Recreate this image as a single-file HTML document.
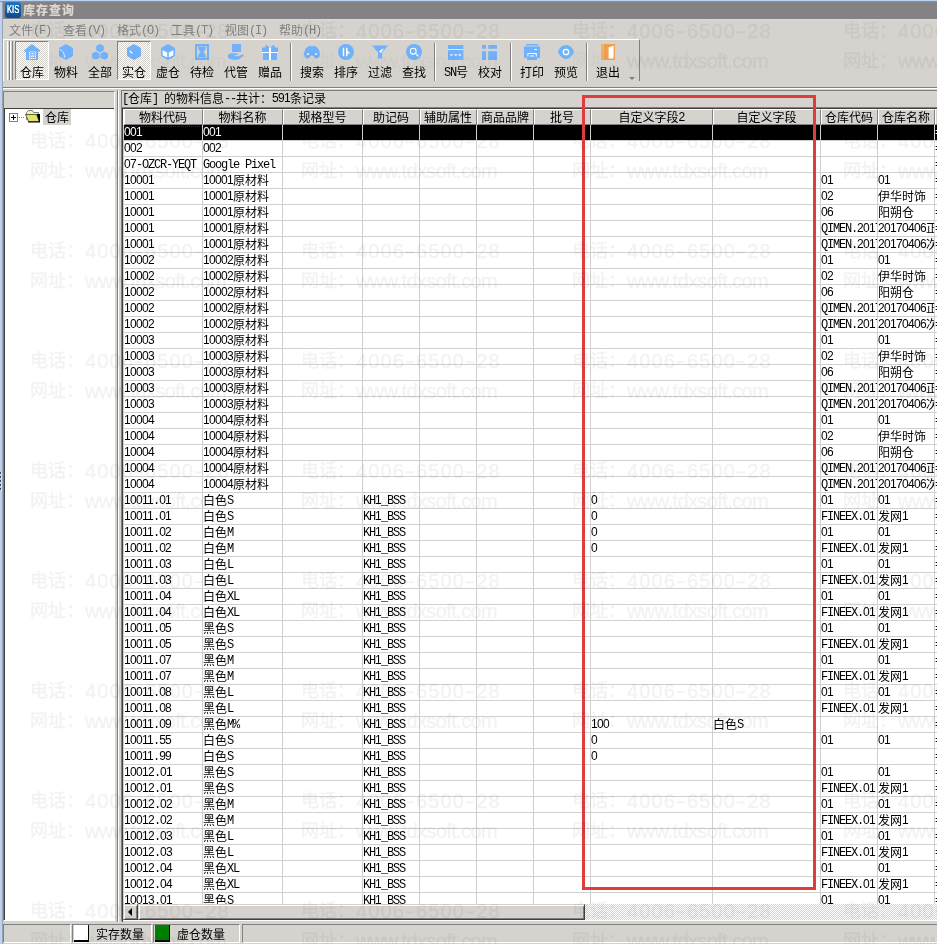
<!DOCTYPE html>
<html lang="zh-CN"><head><meta charset="utf-8"><title>库存查询</title>
<style>
*{box-sizing:border-box;margin:0;padding:0}
html,body{width:937px;height:944px;overflow:hidden;background:#d6d3ce}
body{font:12px/16px "Liberation Mono","Noto Sans CJK SC",monospace;letter-spacing:-1.2px;color:#000;-webkit-font-smoothing:antialiased}
b{font-weight:normal;letter-spacing:0;line-height:0;font-family:"Liberation Sans","Noto Sans CJK SC",sans-serif}
#win{position:absolute;left:0;top:0;width:937px;height:944px;overflow:hidden;will-change:transform}
#win div,#win span,#win svg{position:absolute}
#win b{position:relative;top:1px}
i{font-style:normal;font-family:"Liberation Sans",sans-serif;letter-spacing:-.674px;line-height:0}
#edge-l{left:0;top:0;width:3px;height:944px;background:#bfd2ea;border-right:1px solid #94a3b8}
#edge-l i{position:absolute;left:0;width:1px;height:2px;background:#3c4c5a;box-shadow:1px 1px 0 #eef3fa}
#edge-t{left:0;top:0;width:937px;height:2px;background:linear-gradient(#b6d2f0 0 1px,#8c909e 1px 2px)}
#title{left:3px;top:2px;width:934px;height:17px;background:#858286}
#appicon{left:2px;top:0;width:16px;height:16px;border-radius:3px;background:linear-gradient(#1a76c6,#0a4a8e)}
#appicon span{left:2px;top:2px;font:10px/12px "Liberation Sans",sans-serif;letter-spacing:0;color:#fff;transform:scaleX(.76);transform-origin:0 0;text-shadow:0 0 0 #fff}
#caption{left:20px;top:0;height:17px;line-height:21px;color:#dcd8d0;white-space:nowrap}
#caption{font-weight:900;letter-spacing:1px}
#menu{left:3px;top:19px;width:934px;height:20px;border-top:1px solid #dddad6}
.mi{top:3px;margin-left:-3px;height:16px;color:#808080;white-space:nowrap}
#tb{left:3px;top:39px;width:637px;height:42px;border-top:1px solid #fff;border-right:1px solid #808080;box-shadow:inset 1px 0 0 #fff}
.grip{left:4px;top:1px;width:3px;height:39px;border-left:1px solid #fff;border-right:1px solid #808080}
.grip.g2{left:7px}
.btn{top:1px;width:34px;height:39px;margin-left:-3px}
.btn.down{border:1px solid;border-color:#808080 #fff #fff #808080;background:repeating-conic-gradient(#fff 0 25%,#d6d3ce 0 50%) 0 0/2px 2px}
.btn svg{left:9px;top:3px}
.btn.down svg{left:8px;top:2px}
.btn .lbl{left:0;width:34px;top:24px;text-align:center;white-space:nowrap}
.btn.down .lbl{left:-1px;top:23px}
.sep{margin-left:-3px;top:3px;width:2px;height:38px;border-left:1px solid #808080;border-right:1px solid #fff}
.chev{left:626px;top:37px;width:0;height:0;border:3px solid transparent;border-top-color:#808080;border-bottom:0}
#rule{left:3px;top:87px;width:934px;height:2px;border-top:1px solid #808080;border-bottom:1px solid #fff}
#tree{left:3px;top:91px;width:112px;height:830px;border-top:1px solid #808080;border-left:1px solid #808080;border-right:1px solid #fff;border-bottom:1px solid #fff}
#treehead{left:0;top:0;width:110px;height:16px;background:#d6d3ce}
#treebody{left:0;top:16px;width:110px;height:812px;background:#fff;border-top:1px solid #404040;border-left:1px solid #404040}
.plus{left:4px;top:4px;width:9px;height:9px;border:1px solid #808080;background:#fff}
.plus:before,.plus:after{content:"";position:absolute;background:#000}
.plus:before{left:1px;top:3px;width:5px;height:1px}
.plus:after{left:3px;top:1px;width:1px;height:5px}
.dots{left:14px;top:8px;width:6px;height:1px;background:repeating-linear-gradient(90deg,#808080 0 1px,transparent 1px 2px)}
.fold{left:19px;top:0}
.node{left:38px;top:0;width:28px;height:16px;line-height:18px;background:#d6d3ce;padding-left:2px;white-space:nowrap}
#split{left:117px;top:90px;width:2px;height:832px;border-left:1px solid #808080;border-right:1px solid #fff}
#pane{left:121px;top:90px;width:816px;height:17px;border-top:1px solid #808080;border-left:1px solid #808080}
#info{left:0px;top:0px;height:16px;white-space:nowrap}
#gridbox{left:121px;top:107px;width:816px;height:814px;border-top:1px solid #808080;border-left:1px solid #808080;background:#fff}
#gridbox:before{content:"";position:absolute;left:0;top:0;width:815px;height:813px;border-top:1px solid #404040;border-left:1px solid #404040}
#grid{left:123px;top:109px;width:814px;height:795px;background:#fff;overflow:hidden}
.hr{left:0;top:0;width:900px;height:16px;background:#fff}
.hc{top:0;height:16px;padding-right:1px;background:#d6d3ce;border:1px solid;border-color:#fff #808080 #808080 #fff;text-align:center;white-space:nowrap;overflow:hidden;line-height:16px}
.r{left:0;width:900px;height:16px;border-bottom:1px solid #d0d0d0;border-left:1px solid #d0d0d0}
.c{top:0;height:15px;border-right:1px solid #d0d0d0;white-space:nowrap;overflow:hidden;padding-left:0;line-height:17px}
.r.sel{background:#000;color:#fff;border-bottom-color:#d0d0d0}
.r.sel .c{border-right-color:#d0d0d0}
.foc:after{content:"";position:absolute;left:0;top:1px;right:0;bottom:0;border-top:1px dotted #2c2c2c}
#hs{left:123px;top:904px;width:814px;height:16px;background:repeating-conic-gradient(#fff 0 25%,#d6d3ce 0 50%) 0 0/2px 2px}
.sbtn{left:0;top:0;width:15px;height:16px;background:#d6d3ce;border:1px solid;border-color:#d6d3ce #404040 #404040 #d6d3ce;box-shadow:inset 1px 1px 0 #fff,inset -1px -1px 0 #808080}
.sbtn i{position:absolute;left:4px;top:3px;width:0;height:0;border:4px solid transparent;border-right-color:#000;border-left:0}
.thumb{left:15px;top:0;width:447px;height:16px;background:#d6d3ce;border:1px solid;border-color:#d6d3ce #404040 #404040 #d6d3ce;box-shadow:inset 1px 1px 0 #fff,inset -1px -1px 0 #808080}
#status{left:0;top:923px;width:937px;height:21px}
.sp{top:1px;height:19px;border:1px solid;border-color:#808080 #fff #fff #808080}
.box{left:1px;top:0;width:15px;height:17px;background:#fff;border-bottom:2px solid #000;border-right:1px solid #000}
.box.grn{background:#008000}
.st{top:2px;white-space:nowrap}
#mark{left:582px;top:95px;width:234px;height:795px;border:3px solid #e03c3c}
#wm{left:0;top:0;width:937px;height:944px;pointer-events:none}
.w{font:19px/30px "Liberation Sans","Noto Sans CJK SC",sans-serif;letter-spacing:0;color:#000;-webkit-text-stroke:.4px #000;opacity:.05;white-space:nowrap;height:30px;width:240px}
.w b{font:18px/30px "Liberation Sans","Noto Sans CJK SC",sans-serif;letter-spacing:0;position:absolute !important;left:0;top:0}
.w span{left:55px;top:1px;font-size:20px}
.w .n{letter-spacing:1.12px}
.w .n u{text-decoration:none;display:inline-block;width:11.1px;text-align:center;transform:scaleX(1.5)}
.w .u{letter-spacing:-.59px}
.w.f{opacity:.022}
.w b.f{opacity:.44}

</style></head>
<body>
<div id="win">
<div id="edge-l"><i style="top:472px"></i><i style="top:476px"></i><i style="top:480px"></i><i style="top:484px"></i><i style="top:488px"></i></div><div id="edge-t"></div>
<div id="title"><div id="appicon"><span>KIS</span></div><div id="caption">库存查询</div></div>
<div id="menu"><span class="mi" style="left:9px"><b>文件</b>(F)</span><span class="mi" style="left:63px"><b>查看</b>(V)</span><span class="mi" style="left:117px"><b>格式</b>(O)</span><span class="mi" style="left:171px"><b>工具</b>(T)</span><span class="mi" style="left:225px"><b>视图</b>(I)</span><span class="mi" style="left:279px"><b>帮助</b>(H)</span></div>
<div id="tb"><div class="grip"></div><div class="grip g2"></div>
<div class="btn down" style="left:15px"><svg width="16" height="16" viewBox="0 0 16 16"><path d="M8 0 L16 6.2 V7.6 H14 V16 H2 V7.6 H0 V6.2 Z M5 7.4 V15 H12 V7.4 Z" fill="#6fb1fb" fill-rule="evenodd"/><path d="M5.9 8.3 H11.1 V14.1 H5.9 Z M6.7 9.1 V10.3 H10.3 V9.1 Z M6.7 11.2 V13.3 H10.3 V11.2 Z" fill="#6fb1fb" fill-rule="evenodd"/></svg><span class="lbl"><b>仓库</b></span></div>
<div class="btn" style="left:49px"><svg width="16" height="16" viewBox="0 0 16 16"><path d="M8 0 L15 4 V12 L8 16 L1 12 V4 Z" fill="#6fb1fb"/><path d="M1.6 5.2 Q6.4 7 6.6 13.6" fill="none" stroke="#e4ecf6" stroke-width="1"/></svg><span class="lbl"><b>物料</b></span></div>
<div class="btn" style="left:83px"><svg width="16" height="16" viewBox="0 0 16 16"><path d="M8 0 L11.78 2.1 L11.78 6.3 L8 8.4 L4.22 6.3 L4.22 2.1 Z M3.8 7.4 L7.58 9.5 L7.58 13.7 L3.8 15.8 L0.02 13.7 L0.02 9.5 Z M12.2 7.4 L15.98 9.5 L15.98 13.7 L12.2 15.8 L8.42 13.7 L8.42 9.5 Z" fill="#6fb1fb"/></svg><span class="lbl"><b>全部</b></span></div>
<div class="btn down" style="left:117px"><svg width="16" height="16" viewBox="0 0 16 16"><path d="M8 0 L15 4 V12 L8 16 L1 12 V4 Z" fill="#6fb1fb"/><path d="M3.6 6.6 L6.4 9.6" stroke="#fff" stroke-width="1.2" fill="none"/></svg><span class="lbl"><b>实仓</b></span></div>
<div class="btn" style="left:151px"><svg width="16" height="16" viewBox="0 0 16 16"><path d="M8 0 L15 4 V12 L8 16 L1 12 V4 Z" fill="#6fb1fb"/><path d="M2.6 6.2 L7.2 8.6 V13.6 L2.6 11.2 Z M13.4 6.2 L8.8 8.6 V13.6 L13.4 11.2 Z" fill="#fff"/></svg><span class="lbl"><b>虚仓</b></span></div>
<div class="btn" style="left:185px"><svg width="16" height="16" viewBox="0 0 16 16"><path d="M1 0 H15 V16 H1 Z M3 2.5 V13.5 H13 V2.5 Z" fill="#6fb1fb" fill-rule="evenodd"/><path d="M4 3 H12 Q11.6 6.6 9.4 8 Q11.6 9.4 12 13 H4 Q4.4 9.4 6.6 8 Q4.4 6.6 4 3 Z" fill="#6fb1fb"/></svg><span class="lbl"><b>待检</b></span></div>
<div class="btn" style="left:219px"><svg width="16" height="16" viewBox="0 0 16 16"><path d="M4 0 H13 V8 H4 Z" fill="#6fb1fb"/><path d="M0 11 Q1 9 4 9.2 L9 9.6 Q10.6 10 9.6 11 L6.4 11.2 V12 L10.6 12.2 L14.4 10.6 Q16 10.4 15.6 11.8 L10.6 15.4 Q7 16.4 3 15.2 L0 14 Z" fill="#6fb1fb"/></svg><span class="lbl"><b>代管</b></span></div>
<div class="btn" style="left:253px"><svg width="16" height="16" viewBox="0 0 16 16"><path d="M3 3.6 L4 0.6 L7 3 L8 3.6 L9 3 L12 0.6 L13 3.6 H16 V8 H15 V16 H1 V8 H0 V3.6 Z" fill="#6fb1fb"/><path d="M7 3.6 H9 V16 H7 Z M0 8 H16 V9 H0 Z" fill="#fff"/></svg><span class="lbl"><b>赠品</b></span></div>
<div class="sep" style="left:290px"></div>
<div class="btn" style="left:295px"><svg width="16" height="16" viewBox="0 0 16 16"><path d="M0 10.6 Q0.2 4.6 4.2 2.4 Q6.4 1.2 8 2.4 Q9.6 1.2 11.8 2.4 Q15.8 4.6 16 10.6 Q15.6 14.2 12.4 14.4 Q9.8 14.2 9.4 11.8 H6.6 Q6.2 14.2 3.6 14.4 Q0.4 14.2 0 10.6 Z" fill="#6fb1fb"/><path d="M2.4 10 L4 8.8 L5.6 10 L4 11.2 Z M10.4 10 L12 8.8 L13.6 10 L12 11.2 Z" fill="#f4e8f4"/></svg><span class="lbl"><b>搜索</b></span></div>
<div class="btn" style="left:329px"><svg width="16" height="16" viewBox="0 0 16 16"><circle cx="8" cy="8" r="8" fill="#6fb1fb"/><path d="M4.8 3.8 H6.2 V12.2 H4.8 Z M8 3.8 H9.4 V6.6 L12.2 9.4 H9.4 V12.2 H8 Z" fill="#fff"/></svg><span class="lbl"><b>排序</b></span></div>
<div class="btn" style="left:363px"><svg width="16" height="16" viewBox="0 0 16 16"><path d="M0 1.6 H16 L10.2 8.6 V14.6 H6 V8.6 Z" fill="#6fb1fb"/><path d="M6.4 7.4 L12 4.2 L8.8 9.4 L8 7.8 Z" fill="#fff"/></svg><span class="lbl"><b>过滤</b></span></div>
<div class="btn" style="left:397px"><svg width="16" height="16" viewBox="0 0 16 16"><circle cx="8" cy="8" r="8" fill="#6fb1fb"/><circle cx="7.2" cy="7.2" r="2.9" fill="none" stroke="#fff" stroke-width="1.1"/><path d="M9.4 9.4 L12.4 12.4" stroke="#fff" stroke-width="1.3"/></svg><span class="lbl"><b>查找</b></span></div>
<div class="sep" style="left:434px"></div>
<div class="btn" style="left:439px"><svg width="16" height="16" viewBox="0 0 16 16"><path d="M0 1 H15.4 V16 H0 Z" fill="#6fb1fb"/><path d="M0 5 H15.4 V5.9 H0 Z M2.2 10 H4.6 V11.8 H2.2 Z M6.4 10 H8.8 V11.8 H6.4 Z M10.6 10 H13 V11.8 H10.6 Z" fill="#dcebfb"/></svg><span class="lbl">SN<b>号</b></span></div>
<div class="btn" style="left:473px"><svg width="16" height="16" viewBox="0 0 16 16"><path d="M0 1 H4 V4.8 H0 Z M6.2 1 H15 V4.8 H6.2 Z M0 7.2 H4 V16 H0 Z M6.2 7.2 H15 V16 H6.2 Z" fill="#6fb1fb"/></svg><span class="lbl"><b>校对</b></span></div>
<div class="sep" style="left:510px"></div>
<div class="btn" style="left:515px"><svg width="16" height="16" viewBox="0 0 16 16"><path d="M2 0 H14.4 V1.6 H2 Z M0 2.6 H16 V14 H13 V16 H3 V14 H0 Z" fill="#6fb1fb"/><path d="M3.4 9 H12.8 V12.6 H11.8 V10 H4.4 V12.6 H3.4 Z M6 11.4 H10 V12.4 H6 Z M10.4 5 H13 V5.9 H10.4 Z" fill="#fff"/></svg><span class="lbl"><b>打印</b></span></div>
<div class="btn" style="left:549px"><svg width="16" height="16" viewBox="0 0 16 16"><path d="M0 8 Q1 4 5 1.6 Q8 0.2 11 1.6 Q15 4 16 8 Q15 11.6 11 14.2 Q8 15.6 5 14.2 Q1 11.6 0 8 Z" fill="#6fb1fb"/><circle cx="8" cy="8" r="2.7" fill="none" stroke="#fff" stroke-width="1.3"/></svg><span class="lbl"><b>预览</b></span></div>
<div class="sep" style="left:586px"></div>
<div class="btn" style="left:591px"><svg width="16" height="16" viewBox="0 0 16 16"><path d="M1 0 H15 V16 H1 Z" fill="#f0a04c"/><path d="M8.6 3.6 L13.6 1.6 V14.6 H8.6 Z" fill="#fff"/><path d="M1 0 H4 V16 H1 Z" fill="#f4b066"/></svg><span class="lbl"><b>退出</b></span></div>
<div class="chev"></div></div>
<div id="rule"></div>
<div id="tree"><div id="treehead"></div><div id="treebody"><div class="plus"></div><div class="dots"></div><svg class="fold" width="17" height="14" viewBox="0 0 17 14"><path d="M2.5 3.5 L4.5 1.5 H8.5 L9.5 3.5 H14.5 V5.5 H4.5 L2.5 10.5 Z" fill="#f4f4b4" stroke="#808070" stroke-width="1"/><path d="M1.5 5.5 H12.5 L15.5 12.5 H4.5 Z" fill="#e2e270" stroke="#606040" stroke-width="1"/><path d="M12.6 5 H16 V13.6 H4 V12.6 H15 Z" fill="#000"/></svg><span class="node"><b>仓库</b></span></div></div>
<div id="split"></div>
<div id="pane"><div id="info">[<b>仓库</b>] <b>的物料信息</b>--<b>共计：</b><i>591</i><b>条记录</b></div></div>
<div id="gridbox"></div>
<div id="grid">
<div class="hr"><div class="hc" style="left:1px;width:79px"><b>物料代码</b></div><div class="hc" style="left:80px;width:80px"><b>物料名称</b></div><div class="hc" style="left:160px;width:80px"><b>规格型号</b></div><div class="hc" style="left:240px;width:57px"><b>助记码</b></div><div class="hc" style="left:297px;width:57px"><b>辅助属性</b></div><div class="hc" style="left:354px;width:57px"><b>商品品牌</b></div><div class="hc" style="left:411px;width:57px"><b>批号</b></div><div class="hc" style="left:468px;width:122px"><b>自定义字段</b><i>2</i></div><div class="hc" style="left:590px;width:108px"><b>自定义字段</b></div><div class="hc" style="left:698px;width:57px"><b>仓库代码</b></div><div class="hc" style="left:755px;width:57px"><b>仓库名称</b></div><div class="hc" style="left:812px;width:25px"></div></div>
<div class="r sel" style="top:16px"><div class="c foc" style="left:0px;width:79px"><i>001</i></div><div class="c" style="left:79px;width:80px"><i>001</i></div><div class="c" style="left:159px;width:80px"></div><div class="c" style="left:239px;width:57px"></div><div class="c" style="left:296px;width:57px"></div><div class="c" style="left:353px;width:57px"></div><div class="c" style="left:410px;width:57px"></div><div class="c" style="left:467px;width:122px"></div><div class="c" style="left:589px;width:108px"></div><div class="c" style="left:697px;width:57px"></div><div class="c" style="left:754px;width:57px"></div><div class="c" style="left:811px;width:25px">=</div></div>
<div class="r" style="top:32px"><div class="c" style="left:0px;width:79px"><i>002</i></div><div class="c" style="left:79px;width:80px"><i>002</i></div><div class="c" style="left:159px;width:80px"></div><div class="c" style="left:239px;width:57px"></div><div class="c" style="left:296px;width:57px"></div><div class="c" style="left:353px;width:57px"></div><div class="c" style="left:410px;width:57px"></div><div class="c" style="left:467px;width:122px"></div><div class="c" style="left:589px;width:108px"></div><div class="c" style="left:697px;width:57px"></div><div class="c" style="left:754px;width:57px"></div><div class="c" style="left:811px;width:25px">=</div></div>
<div class="r" style="top:48px"><div class="c" style="left:0px;width:79px"><i>07</i>-OZCR-YEQT</div><div class="c" style="left:79px;width:80px">Google Pixel</div><div class="c" style="left:159px;width:80px"></div><div class="c" style="left:239px;width:57px"></div><div class="c" style="left:296px;width:57px"></div><div class="c" style="left:353px;width:57px"></div><div class="c" style="left:410px;width:57px"></div><div class="c" style="left:467px;width:122px"></div><div class="c" style="left:589px;width:108px"></div><div class="c" style="left:697px;width:57px"></div><div class="c" style="left:754px;width:57px"></div><div class="c" style="left:811px;width:25px">=</div></div>
<div class="r" style="top:64px"><div class="c" style="left:0px;width:79px"><i>10001</i></div><div class="c" style="left:79px;width:80px"><i>10001</i><b>原材料</b></div><div class="c" style="left:159px;width:80px"></div><div class="c" style="left:239px;width:57px"></div><div class="c" style="left:296px;width:57px"></div><div class="c" style="left:353px;width:57px"></div><div class="c" style="left:410px;width:57px"></div><div class="c" style="left:467px;width:122px"></div><div class="c" style="left:589px;width:108px"></div><div class="c" style="left:697px;width:57px"><i>01</i></div><div class="c" style="left:754px;width:57px"><i>01</i></div><div class="c" style="left:811px;width:25px">=</div></div>
<div class="r" style="top:80px"><div class="c" style="left:0px;width:79px"><i>10001</i></div><div class="c" style="left:79px;width:80px"><i>10001</i><b>原材料</b></div><div class="c" style="left:159px;width:80px"></div><div class="c" style="left:239px;width:57px"></div><div class="c" style="left:296px;width:57px"></div><div class="c" style="left:353px;width:57px"></div><div class="c" style="left:410px;width:57px"></div><div class="c" style="left:467px;width:122px"></div><div class="c" style="left:589px;width:108px"></div><div class="c" style="left:697px;width:57px"><i>02</i></div><div class="c" style="left:754px;width:57px"><b>伊华时饰</b></div><div class="c" style="left:811px;width:25px">=</div></div>
<div class="r" style="top:96px"><div class="c" style="left:0px;width:79px"><i>10001</i></div><div class="c" style="left:79px;width:80px"><i>10001</i><b>原材料</b></div><div class="c" style="left:159px;width:80px"></div><div class="c" style="left:239px;width:57px"></div><div class="c" style="left:296px;width:57px"></div><div class="c" style="left:353px;width:57px"></div><div class="c" style="left:410px;width:57px"></div><div class="c" style="left:467px;width:122px"></div><div class="c" style="left:589px;width:108px"></div><div class="c" style="left:697px;width:57px"><i>06</i></div><div class="c" style="left:754px;width:57px"><b>阳朔仓</b></div><div class="c" style="left:811px;width:25px">=</div></div>
<div class="r" style="top:112px"><div class="c" style="left:0px;width:79px"><i>10001</i></div><div class="c" style="left:79px;width:80px"><i>10001</i><b>原材料</b></div><div class="c" style="left:159px;width:80px"></div><div class="c" style="left:239px;width:57px"></div><div class="c" style="left:296px;width:57px"></div><div class="c" style="left:353px;width:57px"></div><div class="c" style="left:410px;width:57px"></div><div class="c" style="left:467px;width:122px"></div><div class="c" style="left:589px;width:108px"></div><div class="c" style="left:697px;width:57px">QIMEN.<i>2017</i></div><div class="c" style="left:754px;width:57px"><i>20170406</i><b>正品</b></div><div class="c" style="left:811px;width:25px">=</div></div>
<div class="r" style="top:128px"><div class="c" style="left:0px;width:79px"><i>10001</i></div><div class="c" style="left:79px;width:80px"><i>10001</i><b>原材料</b></div><div class="c" style="left:159px;width:80px"></div><div class="c" style="left:239px;width:57px"></div><div class="c" style="left:296px;width:57px"></div><div class="c" style="left:353px;width:57px"></div><div class="c" style="left:410px;width:57px"></div><div class="c" style="left:467px;width:122px"></div><div class="c" style="left:589px;width:108px"></div><div class="c" style="left:697px;width:57px">QIMEN.<i>2017</i></div><div class="c" style="left:754px;width:57px"><i>20170406</i><b>次品</b></div><div class="c" style="left:811px;width:25px">=</div></div>
<div class="r" style="top:144px"><div class="c" style="left:0px;width:79px"><i>10002</i></div><div class="c" style="left:79px;width:80px"><i>10002</i><b>原材料</b></div><div class="c" style="left:159px;width:80px"></div><div class="c" style="left:239px;width:57px"></div><div class="c" style="left:296px;width:57px"></div><div class="c" style="left:353px;width:57px"></div><div class="c" style="left:410px;width:57px"></div><div class="c" style="left:467px;width:122px"></div><div class="c" style="left:589px;width:108px"></div><div class="c" style="left:697px;width:57px"><i>01</i></div><div class="c" style="left:754px;width:57px"><i>01</i></div><div class="c" style="left:811px;width:25px">=</div></div>
<div class="r" style="top:160px"><div class="c" style="left:0px;width:79px"><i>10002</i></div><div class="c" style="left:79px;width:80px"><i>10002</i><b>原材料</b></div><div class="c" style="left:159px;width:80px"></div><div class="c" style="left:239px;width:57px"></div><div class="c" style="left:296px;width:57px"></div><div class="c" style="left:353px;width:57px"></div><div class="c" style="left:410px;width:57px"></div><div class="c" style="left:467px;width:122px"></div><div class="c" style="left:589px;width:108px"></div><div class="c" style="left:697px;width:57px"><i>02</i></div><div class="c" style="left:754px;width:57px"><b>伊华时饰</b></div><div class="c" style="left:811px;width:25px">=</div></div>
<div class="r" style="top:176px"><div class="c" style="left:0px;width:79px"><i>10002</i></div><div class="c" style="left:79px;width:80px"><i>10002</i><b>原材料</b></div><div class="c" style="left:159px;width:80px"></div><div class="c" style="left:239px;width:57px"></div><div class="c" style="left:296px;width:57px"></div><div class="c" style="left:353px;width:57px"></div><div class="c" style="left:410px;width:57px"></div><div class="c" style="left:467px;width:122px"></div><div class="c" style="left:589px;width:108px"></div><div class="c" style="left:697px;width:57px"><i>06</i></div><div class="c" style="left:754px;width:57px"><b>阳朔仓</b></div><div class="c" style="left:811px;width:25px">=</div></div>
<div class="r" style="top:192px"><div class="c" style="left:0px;width:79px"><i>10002</i></div><div class="c" style="left:79px;width:80px"><i>10002</i><b>原材料</b></div><div class="c" style="left:159px;width:80px"></div><div class="c" style="left:239px;width:57px"></div><div class="c" style="left:296px;width:57px"></div><div class="c" style="left:353px;width:57px"></div><div class="c" style="left:410px;width:57px"></div><div class="c" style="left:467px;width:122px"></div><div class="c" style="left:589px;width:108px"></div><div class="c" style="left:697px;width:57px">QIMEN.<i>2017</i></div><div class="c" style="left:754px;width:57px"><i>20170406</i><b>正品</b></div><div class="c" style="left:811px;width:25px">=</div></div>
<div class="r" style="top:208px"><div class="c" style="left:0px;width:79px"><i>10002</i></div><div class="c" style="left:79px;width:80px"><i>10002</i><b>原材料</b></div><div class="c" style="left:159px;width:80px"></div><div class="c" style="left:239px;width:57px"></div><div class="c" style="left:296px;width:57px"></div><div class="c" style="left:353px;width:57px"></div><div class="c" style="left:410px;width:57px"></div><div class="c" style="left:467px;width:122px"></div><div class="c" style="left:589px;width:108px"></div><div class="c" style="left:697px;width:57px">QIMEN.<i>2017</i></div><div class="c" style="left:754px;width:57px"><i>20170406</i><b>次品</b></div><div class="c" style="left:811px;width:25px">=</div></div>
<div class="r" style="top:224px"><div class="c" style="left:0px;width:79px"><i>10003</i></div><div class="c" style="left:79px;width:80px"><i>10003</i><b>原材料</b></div><div class="c" style="left:159px;width:80px"></div><div class="c" style="left:239px;width:57px"></div><div class="c" style="left:296px;width:57px"></div><div class="c" style="left:353px;width:57px"></div><div class="c" style="left:410px;width:57px"></div><div class="c" style="left:467px;width:122px"></div><div class="c" style="left:589px;width:108px"></div><div class="c" style="left:697px;width:57px"><i>01</i></div><div class="c" style="left:754px;width:57px"><i>01</i></div><div class="c" style="left:811px;width:25px">=</div></div>
<div class="r" style="top:240px"><div class="c" style="left:0px;width:79px"><i>10003</i></div><div class="c" style="left:79px;width:80px"><i>10003</i><b>原材料</b></div><div class="c" style="left:159px;width:80px"></div><div class="c" style="left:239px;width:57px"></div><div class="c" style="left:296px;width:57px"></div><div class="c" style="left:353px;width:57px"></div><div class="c" style="left:410px;width:57px"></div><div class="c" style="left:467px;width:122px"></div><div class="c" style="left:589px;width:108px"></div><div class="c" style="left:697px;width:57px"><i>02</i></div><div class="c" style="left:754px;width:57px"><b>伊华时饰</b></div><div class="c" style="left:811px;width:25px">=</div></div>
<div class="r" style="top:256px"><div class="c" style="left:0px;width:79px"><i>10003</i></div><div class="c" style="left:79px;width:80px"><i>10003</i><b>原材料</b></div><div class="c" style="left:159px;width:80px"></div><div class="c" style="left:239px;width:57px"></div><div class="c" style="left:296px;width:57px"></div><div class="c" style="left:353px;width:57px"></div><div class="c" style="left:410px;width:57px"></div><div class="c" style="left:467px;width:122px"></div><div class="c" style="left:589px;width:108px"></div><div class="c" style="left:697px;width:57px"><i>06</i></div><div class="c" style="left:754px;width:57px"><b>阳朔仓</b></div><div class="c" style="left:811px;width:25px">=</div></div>
<div class="r" style="top:272px"><div class="c" style="left:0px;width:79px"><i>10003</i></div><div class="c" style="left:79px;width:80px"><i>10003</i><b>原材料</b></div><div class="c" style="left:159px;width:80px"></div><div class="c" style="left:239px;width:57px"></div><div class="c" style="left:296px;width:57px"></div><div class="c" style="left:353px;width:57px"></div><div class="c" style="left:410px;width:57px"></div><div class="c" style="left:467px;width:122px"></div><div class="c" style="left:589px;width:108px"></div><div class="c" style="left:697px;width:57px">QIMEN.<i>2017</i></div><div class="c" style="left:754px;width:57px"><i>20170406</i><b>正品</b></div><div class="c" style="left:811px;width:25px">=</div></div>
<div class="r" style="top:288px"><div class="c" style="left:0px;width:79px"><i>10003</i></div><div class="c" style="left:79px;width:80px"><i>10003</i><b>原材料</b></div><div class="c" style="left:159px;width:80px"></div><div class="c" style="left:239px;width:57px"></div><div class="c" style="left:296px;width:57px"></div><div class="c" style="left:353px;width:57px"></div><div class="c" style="left:410px;width:57px"></div><div class="c" style="left:467px;width:122px"></div><div class="c" style="left:589px;width:108px"></div><div class="c" style="left:697px;width:57px">QIMEN.<i>2017</i></div><div class="c" style="left:754px;width:57px"><i>20170406</i><b>次品</b></div><div class="c" style="left:811px;width:25px">=</div></div>
<div class="r" style="top:304px"><div class="c" style="left:0px;width:79px"><i>10004</i></div><div class="c" style="left:79px;width:80px"><i>10004</i><b>原材料</b></div><div class="c" style="left:159px;width:80px"></div><div class="c" style="left:239px;width:57px"></div><div class="c" style="left:296px;width:57px"></div><div class="c" style="left:353px;width:57px"></div><div class="c" style="left:410px;width:57px"></div><div class="c" style="left:467px;width:122px"></div><div class="c" style="left:589px;width:108px"></div><div class="c" style="left:697px;width:57px"><i>01</i></div><div class="c" style="left:754px;width:57px"><i>01</i></div><div class="c" style="left:811px;width:25px">=</div></div>
<div class="r" style="top:320px"><div class="c" style="left:0px;width:79px"><i>10004</i></div><div class="c" style="left:79px;width:80px"><i>10004</i><b>原材料</b></div><div class="c" style="left:159px;width:80px"></div><div class="c" style="left:239px;width:57px"></div><div class="c" style="left:296px;width:57px"></div><div class="c" style="left:353px;width:57px"></div><div class="c" style="left:410px;width:57px"></div><div class="c" style="left:467px;width:122px"></div><div class="c" style="left:589px;width:108px"></div><div class="c" style="left:697px;width:57px"><i>02</i></div><div class="c" style="left:754px;width:57px"><b>伊华时饰</b></div><div class="c" style="left:811px;width:25px">=</div></div>
<div class="r" style="top:336px"><div class="c" style="left:0px;width:79px"><i>10004</i></div><div class="c" style="left:79px;width:80px"><i>10004</i><b>原材料</b></div><div class="c" style="left:159px;width:80px"></div><div class="c" style="left:239px;width:57px"></div><div class="c" style="left:296px;width:57px"></div><div class="c" style="left:353px;width:57px"></div><div class="c" style="left:410px;width:57px"></div><div class="c" style="left:467px;width:122px"></div><div class="c" style="left:589px;width:108px"></div><div class="c" style="left:697px;width:57px"><i>06</i></div><div class="c" style="left:754px;width:57px"><b>阳朔仓</b></div><div class="c" style="left:811px;width:25px">=</div></div>
<div class="r" style="top:352px"><div class="c" style="left:0px;width:79px"><i>10004</i></div><div class="c" style="left:79px;width:80px"><i>10004</i><b>原材料</b></div><div class="c" style="left:159px;width:80px"></div><div class="c" style="left:239px;width:57px"></div><div class="c" style="left:296px;width:57px"></div><div class="c" style="left:353px;width:57px"></div><div class="c" style="left:410px;width:57px"></div><div class="c" style="left:467px;width:122px"></div><div class="c" style="left:589px;width:108px"></div><div class="c" style="left:697px;width:57px">QIMEN.<i>2017</i></div><div class="c" style="left:754px;width:57px"><i>20170406</i><b>正品</b></div><div class="c" style="left:811px;width:25px">=</div></div>
<div class="r" style="top:368px"><div class="c" style="left:0px;width:79px"><i>10004</i></div><div class="c" style="left:79px;width:80px"><i>10004</i><b>原材料</b></div><div class="c" style="left:159px;width:80px"></div><div class="c" style="left:239px;width:57px"></div><div class="c" style="left:296px;width:57px"></div><div class="c" style="left:353px;width:57px"></div><div class="c" style="left:410px;width:57px"></div><div class="c" style="left:467px;width:122px"></div><div class="c" style="left:589px;width:108px"></div><div class="c" style="left:697px;width:57px">QIMEN.<i>2017</i></div><div class="c" style="left:754px;width:57px"><i>20170406</i><b>次品</b></div><div class="c" style="left:811px;width:25px">=</div></div>
<div class="r" style="top:384px"><div class="c" style="left:0px;width:79px"><i>10011</i>.<i>01</i></div><div class="c" style="left:79px;width:80px"><b>白色</b>S</div><div class="c" style="left:159px;width:80px"></div><div class="c" style="left:239px;width:57px">KH<i>1</i>_BSS</div><div class="c" style="left:296px;width:57px"></div><div class="c" style="left:353px;width:57px"></div><div class="c" style="left:410px;width:57px"></div><div class="c" style="left:467px;width:122px"><i>0</i></div><div class="c" style="left:589px;width:108px"></div><div class="c" style="left:697px;width:57px"><i>01</i></div><div class="c" style="left:754px;width:57px"><i>01</i></div><div class="c" style="left:811px;width:25px">=</div></div>
<div class="r" style="top:400px"><div class="c" style="left:0px;width:79px"><i>10011</i>.<i>01</i></div><div class="c" style="left:79px;width:80px"><b>白色</b>S</div><div class="c" style="left:159px;width:80px"></div><div class="c" style="left:239px;width:57px">KH<i>1</i>_BSS</div><div class="c" style="left:296px;width:57px"></div><div class="c" style="left:353px;width:57px"></div><div class="c" style="left:410px;width:57px"></div><div class="c" style="left:467px;width:122px"><i>0</i></div><div class="c" style="left:589px;width:108px"></div><div class="c" style="left:697px;width:57px">FINEEX.<i>01</i></div><div class="c" style="left:754px;width:57px"><b>发网</b><i>1</i></div><div class="c" style="left:811px;width:25px">=</div></div>
<div class="r" style="top:416px"><div class="c" style="left:0px;width:79px"><i>10011</i>.<i>02</i></div><div class="c" style="left:79px;width:80px"><b>白色</b>M</div><div class="c" style="left:159px;width:80px"></div><div class="c" style="left:239px;width:57px">KH<i>1</i>_BSS</div><div class="c" style="left:296px;width:57px"></div><div class="c" style="left:353px;width:57px"></div><div class="c" style="left:410px;width:57px"></div><div class="c" style="left:467px;width:122px"><i>0</i></div><div class="c" style="left:589px;width:108px"></div><div class="c" style="left:697px;width:57px"><i>01</i></div><div class="c" style="left:754px;width:57px"><i>01</i></div><div class="c" style="left:811px;width:25px">=</div></div>
<div class="r" style="top:432px"><div class="c" style="left:0px;width:79px"><i>10011</i>.<i>02</i></div><div class="c" style="left:79px;width:80px"><b>白色</b>M</div><div class="c" style="left:159px;width:80px"></div><div class="c" style="left:239px;width:57px">KH<i>1</i>_BSS</div><div class="c" style="left:296px;width:57px"></div><div class="c" style="left:353px;width:57px"></div><div class="c" style="left:410px;width:57px"></div><div class="c" style="left:467px;width:122px"><i>0</i></div><div class="c" style="left:589px;width:108px"></div><div class="c" style="left:697px;width:57px">FINEEX.<i>01</i></div><div class="c" style="left:754px;width:57px"><b>发网</b><i>1</i></div><div class="c" style="left:811px;width:25px">=</div></div>
<div class="r" style="top:448px"><div class="c" style="left:0px;width:79px"><i>10011</i>.<i>03</i></div><div class="c" style="left:79px;width:80px"><b>白色</b>L</div><div class="c" style="left:159px;width:80px"></div><div class="c" style="left:239px;width:57px">KH<i>1</i>_BSS</div><div class="c" style="left:296px;width:57px"></div><div class="c" style="left:353px;width:57px"></div><div class="c" style="left:410px;width:57px"></div><div class="c" style="left:467px;width:122px"></div><div class="c" style="left:589px;width:108px"></div><div class="c" style="left:697px;width:57px"><i>01</i></div><div class="c" style="left:754px;width:57px"><i>01</i></div><div class="c" style="left:811px;width:25px">=</div></div>
<div class="r" style="top:464px"><div class="c" style="left:0px;width:79px"><i>10011</i>.<i>03</i></div><div class="c" style="left:79px;width:80px"><b>白色</b>L</div><div class="c" style="left:159px;width:80px"></div><div class="c" style="left:239px;width:57px">KH<i>1</i>_BSS</div><div class="c" style="left:296px;width:57px"></div><div class="c" style="left:353px;width:57px"></div><div class="c" style="left:410px;width:57px"></div><div class="c" style="left:467px;width:122px"></div><div class="c" style="left:589px;width:108px"></div><div class="c" style="left:697px;width:57px">FINEEX.<i>01</i></div><div class="c" style="left:754px;width:57px"><b>发网</b><i>1</i></div><div class="c" style="left:811px;width:25px">=</div></div>
<div class="r" style="top:480px"><div class="c" style="left:0px;width:79px"><i>10011</i>.<i>04</i></div><div class="c" style="left:79px;width:80px"><b>白色</b>XL</div><div class="c" style="left:159px;width:80px"></div><div class="c" style="left:239px;width:57px">KH<i>1</i>_BSS</div><div class="c" style="left:296px;width:57px"></div><div class="c" style="left:353px;width:57px"></div><div class="c" style="left:410px;width:57px"></div><div class="c" style="left:467px;width:122px"></div><div class="c" style="left:589px;width:108px"></div><div class="c" style="left:697px;width:57px"><i>01</i></div><div class="c" style="left:754px;width:57px"><i>01</i></div><div class="c" style="left:811px;width:25px">=</div></div>
<div class="r" style="top:496px"><div class="c" style="left:0px;width:79px"><i>10011</i>.<i>04</i></div><div class="c" style="left:79px;width:80px"><b>白色</b>XL</div><div class="c" style="left:159px;width:80px"></div><div class="c" style="left:239px;width:57px">KH<i>1</i>_BSS</div><div class="c" style="left:296px;width:57px"></div><div class="c" style="left:353px;width:57px"></div><div class="c" style="left:410px;width:57px"></div><div class="c" style="left:467px;width:122px"></div><div class="c" style="left:589px;width:108px"></div><div class="c" style="left:697px;width:57px">FINEEX.<i>01</i></div><div class="c" style="left:754px;width:57px"><b>发网</b><i>1</i></div><div class="c" style="left:811px;width:25px">=</div></div>
<div class="r" style="top:512px"><div class="c" style="left:0px;width:79px"><i>10011</i>.<i>05</i></div><div class="c" style="left:79px;width:80px"><b>黑色</b>S</div><div class="c" style="left:159px;width:80px"></div><div class="c" style="left:239px;width:57px">KH<i>1</i>_BSS</div><div class="c" style="left:296px;width:57px"></div><div class="c" style="left:353px;width:57px"></div><div class="c" style="left:410px;width:57px"></div><div class="c" style="left:467px;width:122px"></div><div class="c" style="left:589px;width:108px"></div><div class="c" style="left:697px;width:57px"><i>01</i></div><div class="c" style="left:754px;width:57px"><i>01</i></div><div class="c" style="left:811px;width:25px">=</div></div>
<div class="r" style="top:528px"><div class="c" style="left:0px;width:79px"><i>10011</i>.<i>05</i></div><div class="c" style="left:79px;width:80px"><b>黑色</b>S</div><div class="c" style="left:159px;width:80px"></div><div class="c" style="left:239px;width:57px">KH<i>1</i>_BSS</div><div class="c" style="left:296px;width:57px"></div><div class="c" style="left:353px;width:57px"></div><div class="c" style="left:410px;width:57px"></div><div class="c" style="left:467px;width:122px"></div><div class="c" style="left:589px;width:108px"></div><div class="c" style="left:697px;width:57px">FINEEX.<i>01</i></div><div class="c" style="left:754px;width:57px"><b>发网</b><i>1</i></div><div class="c" style="left:811px;width:25px">=</div></div>
<div class="r" style="top:544px"><div class="c" style="left:0px;width:79px"><i>10011</i>.<i>07</i></div><div class="c" style="left:79px;width:80px"><b>黑色</b>M</div><div class="c" style="left:159px;width:80px"></div><div class="c" style="left:239px;width:57px">KH<i>1</i>_BSS</div><div class="c" style="left:296px;width:57px"></div><div class="c" style="left:353px;width:57px"></div><div class="c" style="left:410px;width:57px"></div><div class="c" style="left:467px;width:122px"></div><div class="c" style="left:589px;width:108px"></div><div class="c" style="left:697px;width:57px"><i>01</i></div><div class="c" style="left:754px;width:57px"><i>01</i></div><div class="c" style="left:811px;width:25px">=</div></div>
<div class="r" style="top:560px"><div class="c" style="left:0px;width:79px"><i>10011</i>.<i>07</i></div><div class="c" style="left:79px;width:80px"><b>黑色</b>M</div><div class="c" style="left:159px;width:80px"></div><div class="c" style="left:239px;width:57px">KH<i>1</i>_BSS</div><div class="c" style="left:296px;width:57px"></div><div class="c" style="left:353px;width:57px"></div><div class="c" style="left:410px;width:57px"></div><div class="c" style="left:467px;width:122px"></div><div class="c" style="left:589px;width:108px"></div><div class="c" style="left:697px;width:57px">FINEEX.<i>01</i></div><div class="c" style="left:754px;width:57px"><b>发网</b><i>1</i></div><div class="c" style="left:811px;width:25px">=</div></div>
<div class="r" style="top:576px"><div class="c" style="left:0px;width:79px"><i>10011</i>.<i>08</i></div><div class="c" style="left:79px;width:80px"><b>黑色</b>L</div><div class="c" style="left:159px;width:80px"></div><div class="c" style="left:239px;width:57px">KH<i>1</i>_BSS</div><div class="c" style="left:296px;width:57px"></div><div class="c" style="left:353px;width:57px"></div><div class="c" style="left:410px;width:57px"></div><div class="c" style="left:467px;width:122px"></div><div class="c" style="left:589px;width:108px"></div><div class="c" style="left:697px;width:57px"><i>01</i></div><div class="c" style="left:754px;width:57px"><i>01</i></div><div class="c" style="left:811px;width:25px">=</div></div>
<div class="r" style="top:592px"><div class="c" style="left:0px;width:79px"><i>10011</i>.<i>08</i></div><div class="c" style="left:79px;width:80px"><b>黑色</b>L</div><div class="c" style="left:159px;width:80px"></div><div class="c" style="left:239px;width:57px">KH<i>1</i>_BSS</div><div class="c" style="left:296px;width:57px"></div><div class="c" style="left:353px;width:57px"></div><div class="c" style="left:410px;width:57px"></div><div class="c" style="left:467px;width:122px"></div><div class="c" style="left:589px;width:108px"></div><div class="c" style="left:697px;width:57px">FINEEX.<i>01</i></div><div class="c" style="left:754px;width:57px"><b>发网</b><i>1</i></div><div class="c" style="left:811px;width:25px">=</div></div>
<div class="r" style="top:608px"><div class="c" style="left:0px;width:79px"><i>10011</i>.<i>09</i></div><div class="c" style="left:79px;width:80px"><b>黑色</b>M%</div><div class="c" style="left:159px;width:80px"></div><div class="c" style="left:239px;width:57px">KH<i>1</i>_BSS</div><div class="c" style="left:296px;width:57px"></div><div class="c" style="left:353px;width:57px"></div><div class="c" style="left:410px;width:57px"></div><div class="c" style="left:467px;width:122px"><i>100</i></div><div class="c" style="left:589px;width:108px"><b>白色</b>S</div><div class="c" style="left:697px;width:57px"></div><div class="c" style="left:754px;width:57px"></div><div class="c" style="left:811px;width:25px">=</div></div>
<div class="r" style="top:624px"><div class="c" style="left:0px;width:79px"><i>10011</i>.<i>55</i></div><div class="c" style="left:79px;width:80px"><b>白色</b>S</div><div class="c" style="left:159px;width:80px"></div><div class="c" style="left:239px;width:57px">KH<i>1</i>_BSS</div><div class="c" style="left:296px;width:57px"></div><div class="c" style="left:353px;width:57px"></div><div class="c" style="left:410px;width:57px"></div><div class="c" style="left:467px;width:122px"><i>0</i></div><div class="c" style="left:589px;width:108px"></div><div class="c" style="left:697px;width:57px"><i>01</i></div><div class="c" style="left:754px;width:57px"><i>01</i></div><div class="c" style="left:811px;width:25px">=</div></div>
<div class="r" style="top:640px"><div class="c" style="left:0px;width:79px"><i>10011</i>.<i>99</i></div><div class="c" style="left:79px;width:80px"><b>白色</b>S</div><div class="c" style="left:159px;width:80px"></div><div class="c" style="left:239px;width:57px">KH<i>1</i>_BSS</div><div class="c" style="left:296px;width:57px"></div><div class="c" style="left:353px;width:57px"></div><div class="c" style="left:410px;width:57px"></div><div class="c" style="left:467px;width:122px"><i>0</i></div><div class="c" style="left:589px;width:108px"></div><div class="c" style="left:697px;width:57px"></div><div class="c" style="left:754px;width:57px"></div><div class="c" style="left:811px;width:25px">=</div></div>
<div class="r" style="top:656px"><div class="c" style="left:0px;width:79px"><i>10012</i>.<i>01</i></div><div class="c" style="left:79px;width:80px"><b>黑色</b>S</div><div class="c" style="left:159px;width:80px"></div><div class="c" style="left:239px;width:57px">KH<i>1</i>_BSS</div><div class="c" style="left:296px;width:57px"></div><div class="c" style="left:353px;width:57px"></div><div class="c" style="left:410px;width:57px"></div><div class="c" style="left:467px;width:122px"></div><div class="c" style="left:589px;width:108px"></div><div class="c" style="left:697px;width:57px"><i>01</i></div><div class="c" style="left:754px;width:57px"><i>01</i></div><div class="c" style="left:811px;width:25px">=</div></div>
<div class="r" style="top:672px"><div class="c" style="left:0px;width:79px"><i>10012</i>.<i>01</i></div><div class="c" style="left:79px;width:80px"><b>黑色</b>S</div><div class="c" style="left:159px;width:80px"></div><div class="c" style="left:239px;width:57px">KH<i>1</i>_BSS</div><div class="c" style="left:296px;width:57px"></div><div class="c" style="left:353px;width:57px"></div><div class="c" style="left:410px;width:57px"></div><div class="c" style="left:467px;width:122px"></div><div class="c" style="left:589px;width:108px"></div><div class="c" style="left:697px;width:57px">FINEEX.<i>01</i></div><div class="c" style="left:754px;width:57px"><b>发网</b><i>1</i></div><div class="c" style="left:811px;width:25px">=</div></div>
<div class="r" style="top:688px"><div class="c" style="left:0px;width:79px"><i>10012</i>.<i>02</i></div><div class="c" style="left:79px;width:80px"><b>黑色</b>M</div><div class="c" style="left:159px;width:80px"></div><div class="c" style="left:239px;width:57px">KH<i>1</i>_BSS</div><div class="c" style="left:296px;width:57px"></div><div class="c" style="left:353px;width:57px"></div><div class="c" style="left:410px;width:57px"></div><div class="c" style="left:467px;width:122px"></div><div class="c" style="left:589px;width:108px"></div><div class="c" style="left:697px;width:57px"><i>01</i></div><div class="c" style="left:754px;width:57px"><i>01</i></div><div class="c" style="left:811px;width:25px">=</div></div>
<div class="r" style="top:704px"><div class="c" style="left:0px;width:79px"><i>10012</i>.<i>02</i></div><div class="c" style="left:79px;width:80px"><b>黑色</b>M</div><div class="c" style="left:159px;width:80px"></div><div class="c" style="left:239px;width:57px">KH<i>1</i>_BSS</div><div class="c" style="left:296px;width:57px"></div><div class="c" style="left:353px;width:57px"></div><div class="c" style="left:410px;width:57px"></div><div class="c" style="left:467px;width:122px"></div><div class="c" style="left:589px;width:108px"></div><div class="c" style="left:697px;width:57px">FINEEX.<i>01</i></div><div class="c" style="left:754px;width:57px"><b>发网</b><i>1</i></div><div class="c" style="left:811px;width:25px">=</div></div>
<div class="r" style="top:720px"><div class="c" style="left:0px;width:79px"><i>10012</i>.<i>03</i></div><div class="c" style="left:79px;width:80px"><b>黑色</b>L</div><div class="c" style="left:159px;width:80px"></div><div class="c" style="left:239px;width:57px">KH<i>1</i>_BSS</div><div class="c" style="left:296px;width:57px"></div><div class="c" style="left:353px;width:57px"></div><div class="c" style="left:410px;width:57px"></div><div class="c" style="left:467px;width:122px"></div><div class="c" style="left:589px;width:108px"></div><div class="c" style="left:697px;width:57px"><i>01</i></div><div class="c" style="left:754px;width:57px"><i>01</i></div><div class="c" style="left:811px;width:25px">=</div></div>
<div class="r" style="top:736px"><div class="c" style="left:0px;width:79px"><i>10012</i>.<i>03</i></div><div class="c" style="left:79px;width:80px"><b>黑色</b>L</div><div class="c" style="left:159px;width:80px"></div><div class="c" style="left:239px;width:57px">KH<i>1</i>_BSS</div><div class="c" style="left:296px;width:57px"></div><div class="c" style="left:353px;width:57px"></div><div class="c" style="left:410px;width:57px"></div><div class="c" style="left:467px;width:122px"></div><div class="c" style="left:589px;width:108px"></div><div class="c" style="left:697px;width:57px">FINEEX.<i>01</i></div><div class="c" style="left:754px;width:57px"><b>发网</b><i>1</i></div><div class="c" style="left:811px;width:25px">=</div></div>
<div class="r" style="top:752px"><div class="c" style="left:0px;width:79px"><i>10012</i>.<i>04</i></div><div class="c" style="left:79px;width:80px"><b>黑色</b>XL</div><div class="c" style="left:159px;width:80px"></div><div class="c" style="left:239px;width:57px">KH<i>1</i>_BSS</div><div class="c" style="left:296px;width:57px"></div><div class="c" style="left:353px;width:57px"></div><div class="c" style="left:410px;width:57px"></div><div class="c" style="left:467px;width:122px"></div><div class="c" style="left:589px;width:108px"></div><div class="c" style="left:697px;width:57px"><i>01</i></div><div class="c" style="left:754px;width:57px"><i>01</i></div><div class="c" style="left:811px;width:25px">=</div></div>
<div class="r" style="top:768px"><div class="c" style="left:0px;width:79px"><i>10012</i>.<i>04</i></div><div class="c" style="left:79px;width:80px"><b>黑色</b>XL</div><div class="c" style="left:159px;width:80px"></div><div class="c" style="left:239px;width:57px">KH<i>1</i>_BSS</div><div class="c" style="left:296px;width:57px"></div><div class="c" style="left:353px;width:57px"></div><div class="c" style="left:410px;width:57px"></div><div class="c" style="left:467px;width:122px"></div><div class="c" style="left:589px;width:108px"></div><div class="c" style="left:697px;width:57px">FINEEX.<i>01</i></div><div class="c" style="left:754px;width:57px"><b>发网</b><i>1</i></div><div class="c" style="left:811px;width:25px">=</div></div>
<div class="r" style="top:784px"><div class="c" style="left:0px;width:79px"><i>10013</i>.<i>01</i></div><div class="c" style="left:79px;width:80px"><b>黑色</b>S</div><div class="c" style="left:159px;width:80px"></div><div class="c" style="left:239px;width:57px">KH<i>1</i>_BSS</div><div class="c" style="left:296px;width:57px"></div><div class="c" style="left:353px;width:57px"></div><div class="c" style="left:410px;width:57px"></div><div class="c" style="left:467px;width:122px"></div><div class="c" style="left:589px;width:108px"></div><div class="c" style="left:697px;width:57px"><i>01</i></div><div class="c" style="left:754px;width:57px"><i>01</i></div><div class="c" style="left:811px;width:25px">=</div></div>
</div>
<div id="hs"><div class="sbtn"><i></i></div><div class="thumb"></div></div>
<div id="status"><div class="sp" style="left:3px;width:68px"></div><div class="sp" style="left:72px;width:80px"><span class="box"></span><span class="st" style="left:23px"><b>实存数量</b></span></div><div class="sp" style="left:153px;width:87px"><span class="box grn"></span><span class="st" style="left:23px"><b>虚仓数量</b></span></div><div class="sp" style="left:242px;width:700px"></div></div>
<div id="mark"></div>
<div id="wm">
<div class="w" style="left:30px;top:15px"><b>电话：</b><span class="n">4006<u>-</u>6500<u>-</u>28</span></div><div class="w f" style="left:30px;top:45px"><b>网址：</b><span class="u">www.tdxsoft.com</span></div>
<div class="w" style="left:301px;top:15px"><b>电话：</b><span class="n">4006<u>-</u>6500<u>-</u>28</span></div><div class="w f" style="left:301px;top:45px"><b>网址：</b><span class="u">www.tdxsoft.com</span></div>
<div class="w" style="left:572px;top:15px"><b>电话：</b><span class="n">4006<u>-</u>6500<u>-</u>28</span></div><div class="w" style="left:572px;top:45px"><b class="f">网址：</b><span class="u">www.tdxsoft.com</span></div>
<div class="w" style="left:843px;top:15px"><b>电话：</b><span class="n">4006<u>-</u>6500<u>-</u>28</span></div><div class="w" style="left:843px;top:45px"><b>网址：</b><span class="u">www.tdxsoft.com</span></div>
<div class="w" style="left:30px;top:125px"><b>电话：</b><span class="n">4006<u>-</u>6500<u>-</u>28</span></div><div class="w" style="left:30px;top:155px"><b>网址：</b><span class="u">www.tdxsoft.com</span></div>
<div class="w" style="left:301px;top:125px"><b>电话：</b><span class="n">4006<u>-</u>6500<u>-</u>28</span></div><div class="w" style="left:301px;top:155px"><b>网址：</b><span class="u">www.tdxsoft.com</span></div>
<div class="w" style="left:572px;top:125px"><b>电话：</b><span class="n">4006<u>-</u>6500<u>-</u>28</span></div><div class="w" style="left:572px;top:155px"><b>网址：</b><span class="u">www.tdxsoft.com</span></div>
<div class="w" style="left:843px;top:125px"><b>电话：</b><span class="n">4006<u>-</u>6500<u>-</u>28</span></div><div class="w" style="left:843px;top:155px"><b>网址：</b><span class="u">www.tdxsoft.com</span></div>
<div class="w" style="left:30px;top:235px"><b>电话：</b><span class="n">4006<u>-</u>6500<u>-</u>28</span></div><div class="w" style="left:30px;top:265px"><b>网址：</b><span class="u">www.tdxsoft.com</span></div>
<div class="w" style="left:301px;top:235px"><b>电话：</b><span class="n">4006<u>-</u>6500<u>-</u>28</span></div><div class="w" style="left:301px;top:265px"><b>网址：</b><span class="u">www.tdxsoft.com</span></div>
<div class="w" style="left:572px;top:235px"><b>电话：</b><span class="n">4006<u>-</u>6500<u>-</u>28</span></div><div class="w" style="left:572px;top:265px"><b>网址：</b><span class="u">www.tdxsoft.com</span></div>
<div class="w" style="left:843px;top:235px"><b>电话：</b><span class="n">4006<u>-</u>6500<u>-</u>28</span></div><div class="w" style="left:843px;top:265px"><b>网址：</b><span class="u">www.tdxsoft.com</span></div>
<div class="w" style="left:30px;top:345px"><b>电话：</b><span class="n">4006<u>-</u>6500<u>-</u>28</span></div><div class="w" style="left:30px;top:375px"><b>网址：</b><span class="u">www.tdxsoft.com</span></div>
<div class="w" style="left:301px;top:345px"><b>电话：</b><span class="n">4006<u>-</u>6500<u>-</u>28</span></div><div class="w" style="left:301px;top:375px"><b>网址：</b><span class="u">www.tdxsoft.com</span></div>
<div class="w" style="left:572px;top:345px"><b>电话：</b><span class="n">4006<u>-</u>6500<u>-</u>28</span></div><div class="w" style="left:572px;top:375px"><b>网址：</b><span class="u">www.tdxsoft.com</span></div>
<div class="w" style="left:843px;top:345px"><b>电话：</b><span class="n">4006<u>-</u>6500<u>-</u>28</span></div><div class="w" style="left:843px;top:375px"><b>网址：</b><span class="u">www.tdxsoft.com</span></div>
<div class="w" style="left:30px;top:455px"><b>电话：</b><span class="n">4006<u>-</u>6500<u>-</u>28</span></div><div class="w" style="left:30px;top:485px"><b>网址：</b><span class="u">www.tdxsoft.com</span></div>
<div class="w" style="left:301px;top:455px"><b>电话：</b><span class="n">4006<u>-</u>6500<u>-</u>28</span></div><div class="w" style="left:301px;top:485px"><b>网址：</b><span class="u">www.tdxsoft.com</span></div>
<div class="w" style="left:572px;top:455px"><b>电话：</b><span class="n">4006<u>-</u>6500<u>-</u>28</span></div><div class="w" style="left:572px;top:485px"><b>网址：</b><span class="u">www.tdxsoft.com</span></div>
<div class="w" style="left:843px;top:455px"><b>电话：</b><span class="n">4006<u>-</u>6500<u>-</u>28</span></div><div class="w" style="left:843px;top:485px"><b>网址：</b><span class="u">www.tdxsoft.com</span></div>
<div class="w" style="left:30px;top:565px"><b>电话：</b><span class="n">4006<u>-</u>6500<u>-</u>28</span></div><div class="w" style="left:30px;top:595px"><b>网址：</b><span class="u">www.tdxsoft.com</span></div>
<div class="w" style="left:301px;top:565px"><b>电话：</b><span class="n">4006<u>-</u>6500<u>-</u>28</span></div><div class="w" style="left:301px;top:595px"><b>网址：</b><span class="u">www.tdxsoft.com</span></div>
<div class="w" style="left:572px;top:565px"><b>电话：</b><span class="n">4006<u>-</u>6500<u>-</u>28</span></div><div class="w" style="left:572px;top:595px"><b>网址：</b><span class="u">www.tdxsoft.com</span></div>
<div class="w" style="left:843px;top:565px"><b>电话：</b><span class="n">4006<u>-</u>6500<u>-</u>28</span></div><div class="w" style="left:843px;top:595px"><b>网址：</b><span class="u">www.tdxsoft.com</span></div>
<div class="w" style="left:30px;top:675px"><b>电话：</b><span class="n">4006<u>-</u>6500<u>-</u>28</span></div><div class="w" style="left:30px;top:705px"><b>网址：</b><span class="u">www.tdxsoft.com</span></div>
<div class="w" style="left:301px;top:675px"><b>电话：</b><span class="n">4006<u>-</u>6500<u>-</u>28</span></div><div class="w" style="left:301px;top:705px"><b>网址：</b><span class="u">www.tdxsoft.com</span></div>
<div class="w" style="left:572px;top:675px"><b>电话：</b><span class="n">4006<u>-</u>6500<u>-</u>28</span></div><div class="w" style="left:572px;top:705px"><b>网址：</b><span class="u">www.tdxsoft.com</span></div>
<div class="w" style="left:843px;top:675px"><b>电话：</b><span class="n">4006<u>-</u>6500<u>-</u>28</span></div><div class="w" style="left:843px;top:705px"><b>网址：</b><span class="u">www.tdxsoft.com</span></div>
<div class="w" style="left:30px;top:785px"><b>电话：</b><span class="n">4006<u>-</u>6500<u>-</u>28</span></div><div class="w" style="left:30px;top:815px"><b>网址：</b><span class="u">www.tdxsoft.com</span></div>
<div class="w" style="left:301px;top:785px"><b>电话：</b><span class="n">4006<u>-</u>6500<u>-</u>28</span></div><div class="w" style="left:301px;top:815px"><b>网址：</b><span class="u">www.tdxsoft.com</span></div>
<div class="w" style="left:572px;top:785px"><b>电话：</b><span class="n">4006<u>-</u>6500<u>-</u>28</span></div><div class="w" style="left:572px;top:815px"><b>网址：</b><span class="u">www.tdxsoft.com</span></div>
<div class="w" style="left:843px;top:785px"><b>电话：</b><span class="n">4006<u>-</u>6500<u>-</u>28</span></div><div class="w" style="left:843px;top:815px"><b>网址：</b><span class="u">www.tdxsoft.com</span></div>
<div class="w" style="left:30px;top:895px"><b>电话：</b><span class="n">4006<u>-</u>6500<u>-</u>28</span></div><div class="w" style="left:30px;top:925px"><b>网址：</b><span class="u">www.tdxsoft.com</span></div>
<div class="w" style="left:301px;top:895px"><b>电话：</b><span class="n">4006<u>-</u>6500<u>-</u>28</span></div><div class="w" style="left:301px;top:925px"><b>网址：</b><span class="u">www.tdxsoft.com</span></div>
<div class="w" style="left:572px;top:895px"><b>电话：</b><span class="n">4006<u>-</u>6500<u>-</u>28</span></div><div class="w" style="left:572px;top:925px"><b>网址：</b><span class="u">www.tdxsoft.com</span></div>
<div class="w" style="left:843px;top:895px"><b>电话：</b><span class="n">4006<u>-</u>6500<u>-</u>28</span></div><div class="w" style="left:843px;top:925px"><b>网址：</b><span class="u">www.tdxsoft.com</span></div>
</div>
</div>
</body></html>
